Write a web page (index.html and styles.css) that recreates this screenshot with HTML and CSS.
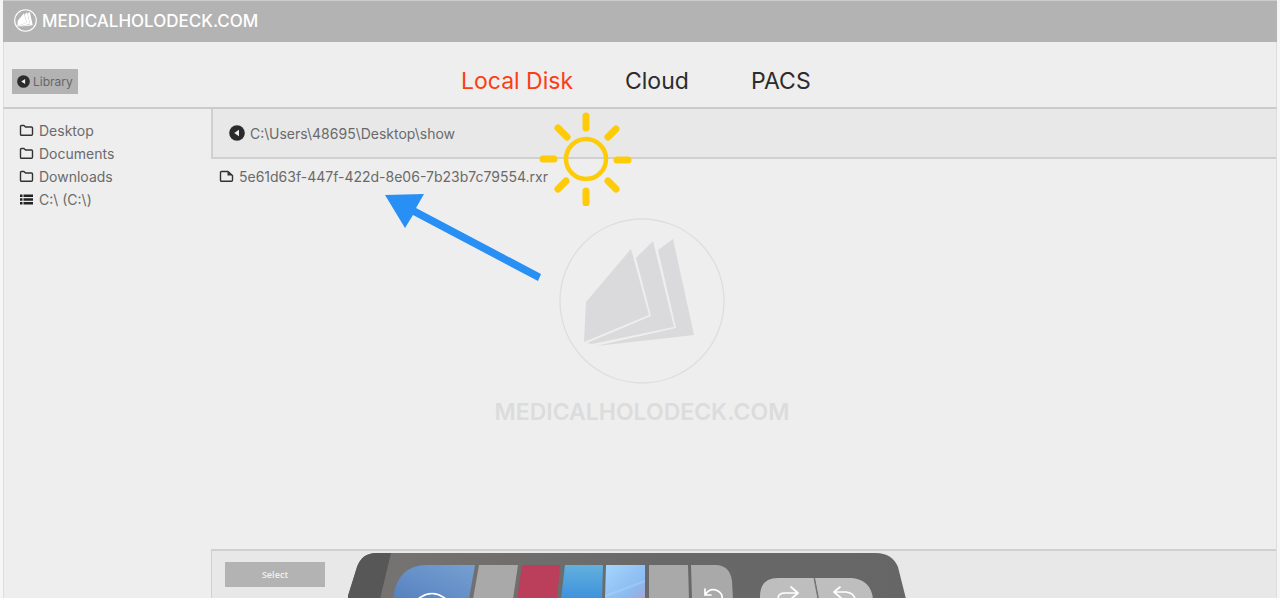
FILE: index.html
```
<!DOCTYPE html>
<html lang="en">
<head>
    <meta charset="utf-8">
    <meta name="viewport" content="width=device-width, initial-scale=1">
    <title>Medicalholodeck - Local Disk</title>
    <link rel="stylesheet" href="styles.css">
</head>
<body>
    <svg class="defs" aria-hidden="true">
        <symbol id="folder" viewBox="0 0 15 13">
            <path d="M1.5 10V2.5Q1.5 1.5 2.5 1.5H5L6.5 3H12.5Q13.5 3 13.5 4V10Q13.5 11.3 12.5 11.3H2.5Q1.5 11.3 1.5 10Z" fill="none" stroke="#333" stroke-width="1.4" stroke-linejoin="round"/>
        </symbol>
        <symbol id="file" viewBox="0 0 15 13">
            <path d="M1.5 10V2.5Q1.5 1.5 2.5 1.5H9L13.5 5.5V10Q13.5 11.3 12.5 11.3H2.5Q1.5 11.3 1.5 10Z" fill="none" stroke="#333" stroke-width="1.4" stroke-linejoin="round"/>
            <path d="M8.5 1.5V5.5H13.5Z" fill="#333"/>
        </symbol>
        <symbol id="drive" viewBox="0 0 15 13">
            <path d="M1 2.7H3.5M4.5 2.7H14M1 6.5H3.5M4.5 6.5H14M1 10.3H3.5M4.5 10.3H14" stroke="#222" stroke-width="2.6"/>
        </symbol>
        <symbol id="back" viewBox="0 0 16 16">
            <circle cx="8" cy="8" r="7.8" fill="#2b2b2b"/>
            <path d="M10 4.8V11.2L5.2 8Z" fill="#eee"/>
        </symbol>
        <symbol id="pages" viewBox="0 0 166 166">
            <path d="M27 84L72 31L90 97L25 124Z"/>
            <path d="M77 40L94 23L115 109L33 126L28 125L92 98Z"/>
            <path d="M99 32L114 21L135 117L37 128L117 110Z"/>
        </symbol>
    </svg>

    <div class="window">
        <header class="header">
            <svg class="logo" viewBox="0 0 166 166" aria-hidden="true">
                <circle cx="83" cy="83" r="78" fill="none" stroke="#fff" stroke-width="8"/>
                <use href="#pages" fill="#fff"/>
            </svg>
            <h1>MEDICALHOLODECK.COM</h1>
        </header>

        <div class="toolbar">
            <button class="library" type="button"><svg aria-hidden="true"><use href="#back"/></svg>Library</button>
            <nav class="tabs">
                <a class="active" href="#local">Local Disk</a>
                <a href="#cloud">Cloud</a>
                <a href="#pacs">PACS</a>
            </nav>
        </div>

        <div class="content">
            <nav class="sidebar">
                <a class="entry" href="#desktop"><svg aria-hidden="true"><use href="#folder"/></svg>Desktop</a>
                <a class="entry" href="#documents"><svg aria-hidden="true"><use href="#folder"/></svg>Documents</a>
                <a class="entry" href="#downloads"><svg aria-hidden="true"><use href="#folder"/></svg>Downloads</a>
                <a class="entry" href="#c"><svg aria-hidden="true"><use href="#drive"/></svg>C:\ (C:\)</a>
            </nav>

            <main class="browser">
                <div class="path">
                    <button class="up" type="button" aria-label="Up one folder"><svg aria-hidden="true"><use href="#back"/></svg></button>
                    <span>C:\Users\48695\Desktop\show</span>
                </div>
                <div class="files">
                    <a class="entry" href="#file"><svg aria-hidden="true"><use href="#file"/></svg>5e61d63f-447f-422d-8e06-7b23b7c79554.rxr</a>
                </div>
                <footer class="footer">
                    <button class="select" type="button">Select</button>
                </footer>
            </main>
        </div>

        <div class="watermark">
            <svg viewBox="0 0 166 166" aria-hidden="true">
                <circle cx="83" cy="83" r="82" fill="none" stroke="#dedede" stroke-width="1.3"/>
                <use href="#pages" fill="#dadadc"/>
            </svg>
            <p>MEDICALHOLODECK.COM</p>
        </div>

        <!-- pointer and highlight over the file list -->
        <svg class="arrow" viewBox="0 0 158 88" aria-hidden="true">
            <path d="M0 1L39 0L31 14L156 80L153 87L28 21L20 34Z" fill="#288ff4"/>
        </svg>
        <svg class="sun" viewBox="0 0 94 94" aria-hidden="true">
            <g fill="none" stroke="#fecb08">
                <circle cx="47" cy="47" r="20" stroke-width="4.5"/>
                <path d="M47 4V16M47 79V91M4 47H15M78 48H89M19 16L28 25M77 17L69 25M27 69L19 77M69 69L77 77" stroke-width="7" stroke-linecap="round"/>
            </g>
        </svg>

        <!-- hand-held tool tablet -->
        <svg class="tablet" viewBox="0 0 560 45" role="img" aria-label="Tool tablet">
            <defs>
                <linearGradient id="body" x1="0" x2="1">
                    <stop offset="0" stop-color="#777573"/>
                    <stop offset="0.6" stop-color="#686868"/>
                    <stop offset="1" stop-color="#666"/>
                </linearGradient>
                <linearGradient id="steel" x1="1" y1="0" x2="0" y2="1">
                    <stop offset="0" stop-color="#76a0d2"/>
                    <stop offset="0.55" stop-color="#648fc8"/>
                    <stop offset="1" stop-color="#5681bd"/>
                </linearGradient>
                <linearGradient id="blue" x1="0" x2="0" y1="0" y2="1">
                    <stop offset="0" stop-color="#61b0dd"/>
                    <stop offset="1" stop-color="#3f91dc"/>
                </linearGradient>
                <linearGradient id="sky" x1="0" x2="1" y1="0" y2="1">
                    <stop offset="0" stop-color="#a5d5fd"/>
                    <stop offset="0.7" stop-color="#8bbbf1"/>
                    <stop offset="1" stop-color="#a6a4d4"/>
                </linearGradient>
            </defs>
            <path d="M-1 46L9 14Q14 0 28 0H528Q544 0 550 14L558 46Z" fill="url(#body)"/>
            <path d="M-1 46L9 14Q14 0 28 0H43L32 46Z" fill="#575757"/>
            <path d="M45 46Q49 12 79 12H127L121 46Z" fill="url(#steel)"/>
            <path d="M131 12H170L165 46H125Z" fill="#a9a9a9"/>
            <path d="M174 12H212L209 46H169Z" fill="#bb3e5b"/>
            <path d="M217 12H255L254 46H213Z" fill="url(#blue)"/>
            <path d="M258 12H297V46H257Z" fill="url(#sky)"/>
            <path d="M257 42Q275 35 297 27V29Q275 38 257 44Z" fill="#b4d8fa" fill-opacity="0.4"/>
            <path d="M301 12H340L341 46H301Z" fill="#a9a9a9"/>
            <path d="M343 12H369Q382 13 384 28L385 46H344Z" fill="#a9a9a9"/>
            <path d="M412 46Q411 25 430 25H466L470 46Z" fill="#bebebe"/>
            <path d="M467 25H504Q523 27 525 46H471Z" fill="#bebebe"/>
            <path d="M466 25L470 46" stroke="#777" fill="none"/>
            <g fill="none" stroke="#fff" stroke-width="1.7" stroke-linecap="round" stroke-linejoin="round">
                <path d="M70 46Q84 35 98 46"/>
                <path d="M357 36V42H363M357 42Q362 34 370 38Q375 41 374 46"/>
                <path d="M430 46Q430 40 437 40H449M443 34L450 40L443 46"/>
                <path d="M507 46Q506 40 498 39H487M492 34L486 39L493 45"/>
            </g>
        </svg>
    </div>
</body>
</html>
```

FILE: styles.css
```
* { margin: 0; padding: 0; box-sizing: border-box; }
body { font-family: Inter, 'Liberation Sans', sans-serif; font-size: 14px; background: #f6f6f6; color: #6a6a6a; height: 100vh; overflow: hidden; }
a { color: inherit; text-decoration: none; }
button { font-family: inherit; border: none; cursor: pointer; }
.defs { position: absolute; width: 0; height: 0; }
.window { position: relative; height: 100%; margin: 0 3px; background: #eee; display: flex; flex-direction: column; overflow: hidden; }

.header { background: #b3b3b3; height: 42px; padding: 0 11px 2px; display: flex; align-items: center; gap: 5px; border-top: 1px solid #ccc; }
.header h1 { color: #fff; font-size: 17px; font-weight: 500; }
.logo { width: 23px; height: 23px; }

.toolbar { position: relative; height: 67px; padding: 0 8px; display: flex; align-items: center; border: 1px solid #ddd; border-top: none; border-bottom: 2px solid #cbcbcb; }
.library { background: #b3b3b3; color: #666; height: 25px; padding: 0 5px; margin-top: 14px; display: flex; align-items: center; gap: 3px; font-size: 12px; }
.library svg { width: 13px; height: 13px; }
.tabs { position: absolute; top: 24px; left: 50%; margin-left: -179px; display: grid; grid-template-columns: 164px 126px auto; font-size: 23px; line-height: 30px; color: #2c2c2c; }
.tabs .active { color: #fa3e16; }

.content { flex: 1; display: flex; min-height: 0; border: 1px solid #ddd; border-width: 0 1px; }
.sidebar { width: 207px; padding: 10px 15px; }
.entry { display: flex; align-items: center; gap: 5px; line-height: 23px; }
.entry svg { width: 15px; height: 13px; }
.browser { flex: 1; display: flex; flex-direction: column; }
.path { background: #e8e8e8; height: 50px; padding: 0 16px; display: flex; align-items: center; gap: 5px; border-left: 2px solid #d0d0d0; border-bottom: 2px solid #d0d0d0; }
.up { width: 16px; height: 16px; background: none; }
.up svg { display: block; width: 16px; height: 16px; }
.files { flex: 1; padding: 6px 8px; }
.footer { background: #e8e8e8; height: 49px; padding: 11px 13px; border-left: 1px solid #d0d0d0; border-top: 2px solid #d0d0d0; }
.select { background: #b3b3b3; color: #eee; width: 100px; height: 25px; font-family: 'Noto Sans', sans-serif; font-size: 9px; font-weight: 600; }

.watermark { position: absolute; top: 218px; left: 4px; right: 0; text-align: center; color: #dcdcdc; pointer-events: none; }
.watermark svg { display: block; width: 166px; height: 166px; margin: 0 auto; }
.watermark p { margin-top: 14px; font-size: 23px; line-height: 28px; font-weight: 600; }

.arrow { position: absolute; top: 194px; left: 50%; width: 158px; height: 88px; margin-left: -255px; pointer-events: none; }
.sun { position: absolute; top: 112px; left: 50%; width: 94px; height: 94px; margin-left: -101px; pointer-events: none; }
.tablet { position: absolute; bottom: 0; left: 50%; width: 560px; height: 45px; margin-left: -292px; }
```
